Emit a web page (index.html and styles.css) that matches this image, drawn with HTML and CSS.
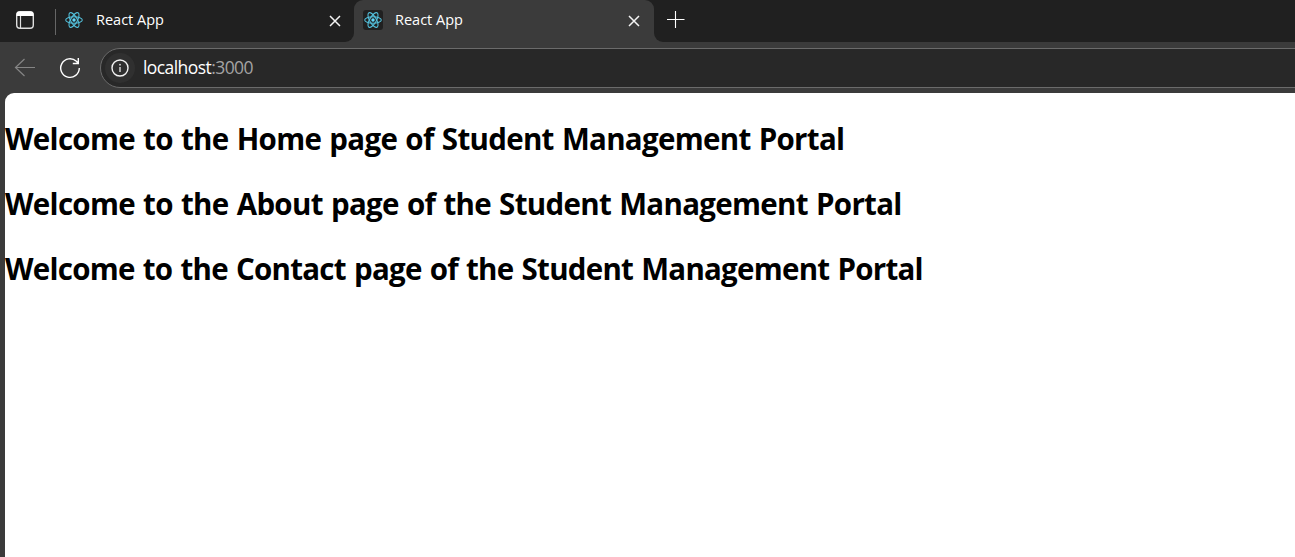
FILE: index.html
```html
<!DOCTYPE html>
<html lang="en">
<head>
<meta charset="utf-8">
<title>React App</title>
<link rel="stylesheet" href="styles.css">
</head>
<body>
<svg width="0" height="0" class="defs" aria-hidden="true">
  <symbol id="react" viewBox="0 0 20 20">
    <g fill="none" stroke="#53bfda" stroke-width="1.1">
      <ellipse cx="10" cy="10" rx="8.3" ry="3.3"/>
      <ellipse cx="10" cy="10" rx="8.3" ry="3.3" transform="rotate(60 10 10)"/>
      <ellipse cx="10" cy="10" rx="8.3" ry="3.3" transform="rotate(120 10 10)"/>
    </g>
    <circle cx="10" cy="10" r="1.7" fill="#61dafb"/>
  </symbol>
  <symbol id="close" viewBox="0 0 12 12">
    <path d="M1 1 11 11M11 1 1 11" fill="none" stroke="#f4f4f4" stroke-width="1.5"/>
  </symbol>
</svg>
<header class="tabs">
  <div class="strip strip-left">
    <svg class="workspace" width="20" height="20" viewBox="0 0 20 20">
      <rect x="1.7" y="1.7" width="16.6" height="16.6" rx="3.2" fill="none" stroke="#dedede" stroke-width="1.4"/>
      <path d="M1.5 6V4.500a3 3 0 0 1 3-3h11a3 3 0 0 1 3 3V6z" fill="#fff"/>
      <path d="M5.500 6V18" stroke="#dedede" stroke-width="1.2"/>
    </svg>
    <span class="divider"></span>
    <div class="tab">
      <svg class="logo"><use href="#react"/></svg>
      <span class="title">React App</span>
      <svg class="close"><use href="#close"/></svg>
    </div>
  </div>
  <div class="active-wrap">
    <div class="tab active">
      <svg class="logo"><use href="#react"/></svg>
      <span class="title">React App</span>
      <svg class="close"><use href="#close"/></svg>
    </div>
  </div>
  <div class="strip strip-right">
    <svg width="18" height="18" viewBox="0 0 18 18"><path d="M0 9.500h17.500M8.500 1v17" stroke="#fff" stroke-width="1.1"/></svg>
  </div>
</header>
<nav class="toolbar">
  <svg class="back" width="22" height="20" viewBox="0 0 22 20"><path d="M21 9.500H1.500M10.500 1 1.500 9.500l9 8.500" fill="none" stroke="#858585" stroke-width="1.2"/></svg>
  <svg class="reload" width="22" height="22" viewBox="0 0 22 22"><path d="M20.300 11a9.300 9.300 0 1 1-2.900-6.700L19 6M19.300 1v5.500h-5.500" fill="none" stroke="#fff" stroke-width="1.4"/></svg>
  <div class="address">
    <span class="info"><svg width="18" height="18" viewBox="0 0 18 18"><circle cx="9" cy="9" r="8" fill="none" stroke="#f2f2f2" stroke-width="1.4"/><path d="M9 8v5" stroke="#ddd" stroke-width="1.4"/><circle cx="9" cy="5.700" r=".9" fill="#ddd"/></svg></span>
    <span class="url">localhost<span class="port">:3000</span></span>
  </div>
</nav>
<main class="page">
  <h1 class="home">Welcome to the Home page of Student Management Portal</h1>
  <h1 class="about">Welcome to the About page of the Student Management Portal</h1>
  <h1 class="contact">Welcome to the Contact page of the Student Management Portal</h1>
</main>
</body>
</html>
```
FILE: styles.css
```css
* { box-sizing: border-box; }
body {
  margin: 0;
  height: 557px;
  display: flex;
  flex-direction: column;
  overflow: hidden;
  background: #3b3b3b;
  font-family: "Open Sans", "Noto Sans", sans-serif;
}
svg { display: block; flex: none; }
.defs { position: absolute; }
.tabs { display: flex; height: 42px; flex: none; }
.strip { display: flex; background: #202020; }
.strip-left { width: 354px; border-bottom-right-radius: 9px; }
.strip-right { flex: 1; border-bottom-left-radius: 9px; padding: 10px 0 0 13px; }
.workspace { margin: 10px 0 0 15px; }
.divider { width: 1px; height: 26px; margin: 9px 0 0 20px; background: #666; }
.active-wrap { width: 300px; background: linear-gradient(#202020 12px, #3b3b3b 12px); }
.tab { display: flex; align-items: center; flex: 1; height: 40px; padding: 0 13px 0 8px; color: #fff; }
.active { height: 42px; padding: 0 14px 2px 9px; background: #3b3b3b; border-radius: 9px 9px 0 0; }
.logo { width: 20px; height: 20px; border-radius: 3px; }
.active .logo { background: #202020; }
.title { margin-left: 12px; flex: 1; font-size: 14.500px; line-height: 20px; letter-spacing: 0; }
.close { width: 12px; height: 12px; margin-top: 1px; }
.toolbar { display: flex; height: 51px; flex: none; }
.back { margin: 16px 0 0 14px; }
.reload { margin: 15px 0 0 23px; }
.address {
  display: flex;
  align-items: center;
  flex: 1;
  height: 40px;
  margin: 6px -2px 0 19px;
  padding-left: 4px;
  background: #282828;
  border: 1px solid #6b6b6b;
  border-radius: 20px 0 0 20px;
}
.info { display: flex; align-items: center; justify-content: center; width: 30px; height: 30px; border-radius: 50%; background: #303030; }
.url { margin: 0 0 2px 8px; color: #fff; font-size: 17.500px; line-height: 24px; letter-spacing: -0.57px; }
.port { color: #a3a3a3; }
.page { flex: 1; margin-left: 5px; padding-top: 13px; background: #fff; border-top-left-radius: 9px; }
h1 { margin: 0; font-size: 29.500px; line-height: 65px; font-weight: 700; letter-spacing: -0.69px; word-spacing: 1.2px; color: #000; white-space: nowrap; }
.contact { letter-spacing: -0.74px; }
```
